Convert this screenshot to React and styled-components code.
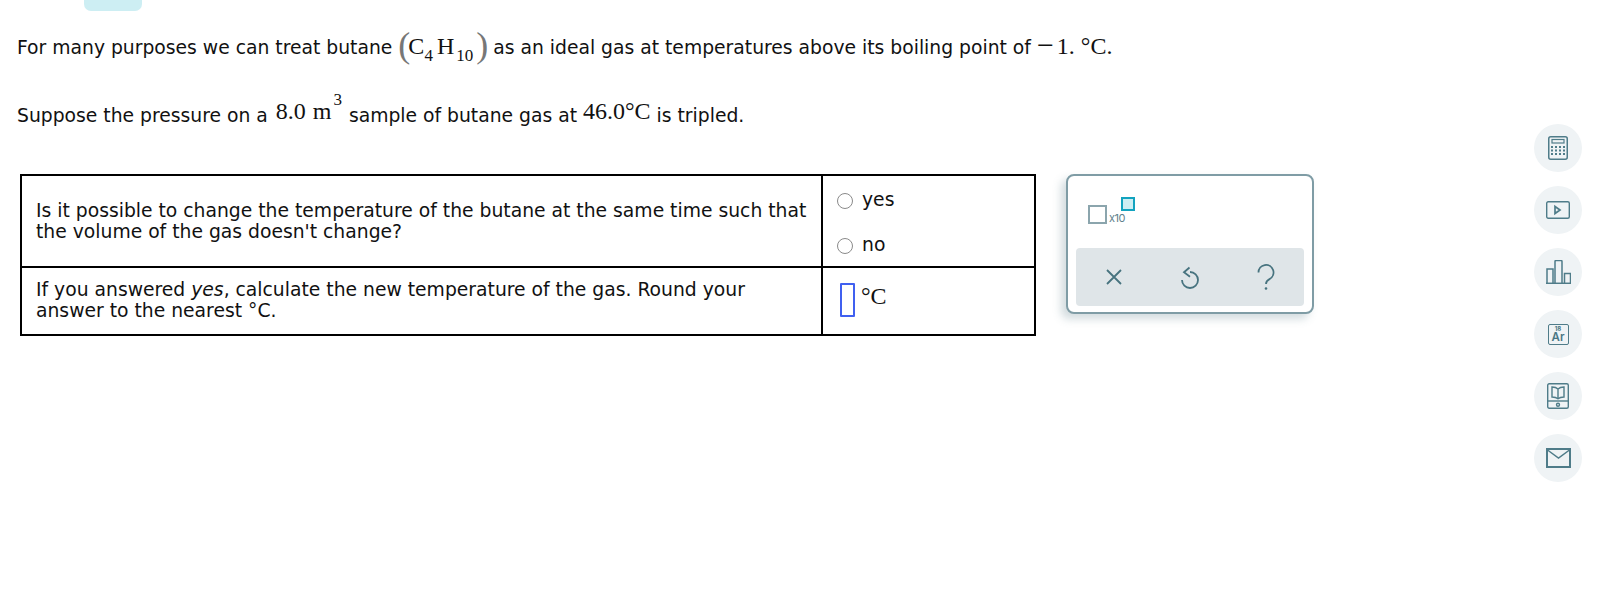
import React from "react";
import styled, { createGlobalStyle } from "styled-components";

const GlobalStyle = createGlobalStyle`
  html, body {
    margin: 0;
    padding: 0;
    background: #fff;
  }
  body {
    font-family: "DejaVu Sans", Verdana, sans-serif;
    color: #111;
  }
`;

const Page = styled.div`
  display: flex;
  width: 1602px;
  height: 616px;
  overflow: hidden;
`;

const Main = styled.main`
  flex: 1;
  min-width: 0;
`;

const Pill = styled.div`
  width: 58px;
  height: 11px;
  margin-left: 84px;
  background: #cdeef3;
  border-radius: 0 0 7px 7px;
`;

const Para = styled.p`
  height: 30px;
  margin: ${(p) => p.$top}px 0 0 17px;
  font-size: 18.75px;
  line-height: 30px;
  white-space: nowrap;
`;

const Math = styled.span`
  font-family: "Liberation Serif", "Times New Roman", serif;
  font-size: ${(p) => p.$size || 24}px;
  line-height: 0;
  color: #111;
  vertical-align: ${(p) => p.$lift || 0}px;
  word-spacing: ${(p) => p.$words || 0}px;
  margin: 0 ${(p) => p.$right || 0}px 0 ${(p) => p.$left || 0}px;
`;

const Paren = styled.span`
  font-family: "Liberation Serif", serif;
  font-size: 36px;
  line-height: 0;
  font-weight: 400;
  color: #777;
  vertical-align: -3px;
  margin: ${(p) => (p.$open ? "0 -2px 0 6px" : "0 5px 0 3px")};
`;

const Sub = styled.sub`
  font-size: 17px;
  line-height: 0;
  vertical-align: -7px;
  margin: 0 ${(p) => p.$right || 0}px 0 ${(p) => p.$left || 0}px;
`;

const Sup = styled.sup`
  font-size: 17px;
  line-height: 0;
  vertical-align: 17px;
  margin: 0 1px 0 2px;
`;

const Content = styled.div`
  display: flex;
  align-items: flex-start;
  gap: 30px;
  margin: 44px 0 0 20px;
`;

const Table = styled.table`
  flex: none;
  width: 1016px;
  table-layout: fixed;
  border-collapse: collapse;
  font-size: 18.75px;
  line-height: 21.5px;
`;

const Td = styled.td`
  border: 2px solid #000;
  padding: 0 10px ${(p) => p.$bottom || 0}px 14px;
  vertical-align: middle;
  width: ${(p) => p.$width || "auto"};
`;

const Row = styled.tr`
  height: ${(p) => p.$height}px;
`;

const Options = styled.div`
  display: flex;
  flex-direction: column;
  gap: 23px;
  padding-top: 2px;
`;

const Option = styled.label`
  display: flex;
  align-items: center;
  gap: 9px;
  height: 22px;
`;

const Radio = styled.input.attrs({ type: "radio" })`
  appearance: none;
  flex: none;
  width: 16px;
  height: 16px;
  margin: 2px 0 0;
  border: 1.5px solid #8a8a8a;
  border-radius: 50%;
  background: #fff;
`;

const AnswerRow = styled.div`
  display: flex;
  align-items: center;
  gap: 6px;
  padding-left: 3px;
`;

const AnswerBox = styled.div`
  width: 15px;
  height: 34px;
  box-sizing: border-box;
  border: 2px solid #4060f0;
  border-radius: 1px;
`;

const Unit = styled(Math)`
  margin-bottom: 8px;
`;

const Panel = styled.div`
  flex: none;
  box-sizing: border-box;
  width: 248px;
  height: 140px;
  display: flex;
  flex-direction: column;
  justify-content: space-between;
  padding: 21px 8px 6px;
  background: #fff;
  border: 2px solid #7f9ca5;
  border-radius: 8px;
  box-shadow: -5px 5px 9px rgba(110, 140, 150, 0.3);
`;

const ExpButton = styled.div`
  display: flex;
  align-items: flex-start;
  height: 27px;
  margin-left: 12px;
  color: #60818b;
`;

const BaseBox = styled.div`
  box-sizing: border-box;
  width: 19px;
  height: 19px;
  margin-top: 8px;
  border: 2px solid #8ba5ad;
`;

const Times = styled.span`
  align-self: flex-end;
  margin: 0 0 -1px 2px;
  font-family: "Inter", "Liberation Sans", sans-serif;
  font-size: 11px;
  line-height: 14px;
  letter-spacing: -0.5px;
`;

const ExpBox = styled.div`
  box-sizing: border-box;
  width: 14px;
  height: 14px;
  margin-left: -4px;
  background: #cdeef3;
  border: 2px solid #12a3bf;
`;

const Toolbar = styled.div`
  display: grid;
  grid-template-columns: repeat(3, 1fr);
  align-items: center;
  justify-items: center;
  height: 58px;
  background: #dfe5e8;
  border-radius: 4px;
`;

const Sidebar = styled.aside`
  flex: none;
  display: flex;
  flex-direction: column;
  gap: 14px;
  width: 48px;
  margin: 124px 20px 0 0;
`;

const Tool = styled.div`
  width: 48px;
  height: 48px;
  display: flex;
  align-items: center;
  justify-content: center;
  border-radius: 50%;
  background: #eff3f5;
`;

const ElementBox = styled.div`
  box-sizing: border-box;
  width: 21px;
  height: 21px;
  display: flex;
  flex-direction: column;
  align-items: center;
  justify-content: center;
  border: 1.5px solid #4f7c89;
  border-radius: 2px;
  color: #4a7684;
  font-family: "Inter", "Liberation Sans", sans-serif;
`;

const ElementNumber = styled.span`
  font-size: 6px;
  font-weight: 700;
  line-height: 6px;
`;

const ElementSymbol = styled.span`
  font-size: 11.5px;
  font-weight: 600;
  line-height: 11px;
`;

const ICON = "#4f7c89";

const CalculatorIcon = () => (
  <svg width="20" height="24" viewBox="0 0 20 24" fill="none" stroke={ICON}>
    <rect x="0.75" y="0.75" width="18.5" height="22.5" rx="2" strokeWidth="1.5" />
    <rect x="4" y="3.5" width="12" height="3.5" strokeWidth="1.2" />
    {[10, 13.5, 17].map((y) =>
      [4, 8, 12, 16].map((x) => (
        <rect key={`${x}-${y}`} x={x - 1} y={y} width="2" height="2" fill={ICON} stroke="none" />
      ))
    )}
  </svg>
);

const VideoIcon = () => (
  <svg width="24" height="18" viewBox="0 0 24 18" fill="none" stroke={ICON} strokeWidth="1.4">
    <rect x="0.7" y="0.7" width="22.6" height="16.6" rx="1.5" />
    <path d="M9 5.5v7l5-3.500z" strokeWidth="1.7" />
  </svg>
);

const ChartIcon = () => (
  <svg width="25" height="24" viewBox="0 0 25 24" fill="none" stroke={ICON} strokeWidth="1.5">
    <path d="M1 24V9h6v15M9 24V1.500a1 1 0 0 1 1-1h5a1 1 0 0 1 1 1V24M18.500 24V13.500h6V24" />
    <path d="M0 23.300h25" />
  </svg>
);

const BookIcon = () => (
  <svg width="22" height="26" viewBox="0 0 22 26" fill="none" stroke={ICON} strokeWidth="1.4">
    <rect x="0.7" y="0.7" width="20.600" height="24.600" rx="1.500" />
    <path d="M0.700 18h20.600" />
    <path d="M11 6c-1.500-1.500-3.500-2-6-2v10c2.500 0 4.500.500 6 1.800 1.500-1.300 3.500-1.800 6-1.800V4c-2.500 0-4.500.500-6 2zM11 6v9.800" />
    <circle cx="11" cy="21.700" r="1.500" />
  </svg>
);

const MailIcon = () => (
  <svg width="25" height="20" viewBox="0 0 25 20" fill="none" stroke={ICON}>
    <rect x="1" y="1" width="23" height="18" strokeWidth="2" />
    <path d="M1.500 2l11 8 11-8" strokeWidth="1.500" />
  </svg>
);

const CloseIcon = () => (
  <svg width="16" height="16" viewBox="0 0 16 16" fill="none" stroke="#47737f" strokeWidth="1.800">
    <path d="M1 1l14 14M15 1L1 15" />
  </svg>
);

const UndoIcon = () => (
  <svg width="20" height="23" viewBox="0 -1 20 23" fill="none" stroke="#47737f" strokeWidth="1.800">
    <path d="M10 5a8 8 0 1 1-8 8" />
    <path d="M9.500.500L4 5.300l6 4.400" />
  </svg>
);

const HelpIcon = () => (
  <svg width="18" height="27" viewBox="0 0 18 27" fill="none" stroke="#47737f" strokeWidth="1.800">
    <path d="M1.500 8.500a7.500 7.500 0 1 1 11 6.600c-2.300 1.200-3.500 2.500-3.500 5" />
    <circle cx="9" cy="24.500" r="1.300" fill="#47737f" stroke="none" />
  </svg>
);

const App = () => {
  return (
    <Page>
      <GlobalStyle />
      <Main>
        <Pill />
        <Para $top={22}>
          For many purposes we can treat butane
          <Paren $open>(</Paren>
          <Math>
            C<Sub $right={4}>4</Sub>H<Sub $left={2}>10</Sub>
          </Math>
          <Paren>)</Paren>
          as an ideal gas at temperatures above its boiling point of{" "}
          <Math $size={30} $lift={-1} $right={3}>
            −
          </Math>
          <Math>1. °C.</Math>
        </Para>
        <Para $top={37}>
          Suppose the pressure on a{" "}
          <Math $lift={3} $left={2} $words={1}>
            8.0 m
          </Math>
          <Math>
            <Sup>3</Sup>
          </Math>{" "}
          sample of butane gas at <Math $lift={3}>46.0°C</Math> is tripled.
        </Para>
        <Content>
          <Table>
            <tbody>
              <Row $height={92}>
                <Td $width="775px">
                  Is it possible to change the temperature of the butane at the
                  same time such that the volume of the gas doesn't change?
                </Td>
                <Td>
                  <Options>
                    <Option>
                      <Radio name="answer" />
                      yes
                    </Option>
                    <Option>
                      <Radio name="answer" />
                      no
                    </Option>
                  </Options>
                </Td>
              </Row>
              <Row $height={68}>
                <Td $bottom={2}>
                  If you answered <em>yes</em>, calculate the new temperature of
                  the gas. Round your answer to the nearest °C.
                </Td>
                <Td $bottom={2}>
                  <AnswerRow>
                    <AnswerBox />
                    <Unit>°C</Unit>
                  </AnswerRow>
                </Td>
              </Row>
            </tbody>
          </Table>
          <Panel>
            <ExpButton>
              <BaseBox />
              <Times>x10</Times>
              <ExpBox />
            </ExpButton>
            <Toolbar>
              <CloseIcon />
              <UndoIcon />
              <HelpIcon />
            </Toolbar>
          </Panel>
        </Content>
      </Main>
      <Sidebar>
        <Tool>
          <CalculatorIcon />
        </Tool>
        <Tool>
          <VideoIcon />
        </Tool>
        <Tool>
          <ChartIcon />
        </Tool>
        <Tool>
          <ElementBox>
            <ElementNumber>18</ElementNumber>
            <ElementSymbol>Ar</ElementSymbol>
          </ElementBox>
        </Tool>
        <Tool>
          <BookIcon />
        </Tool>
        <Tool>
          <MailIcon />
        </Tool>
      </Sidebar>
    </Page>
  );
};

export default App;
